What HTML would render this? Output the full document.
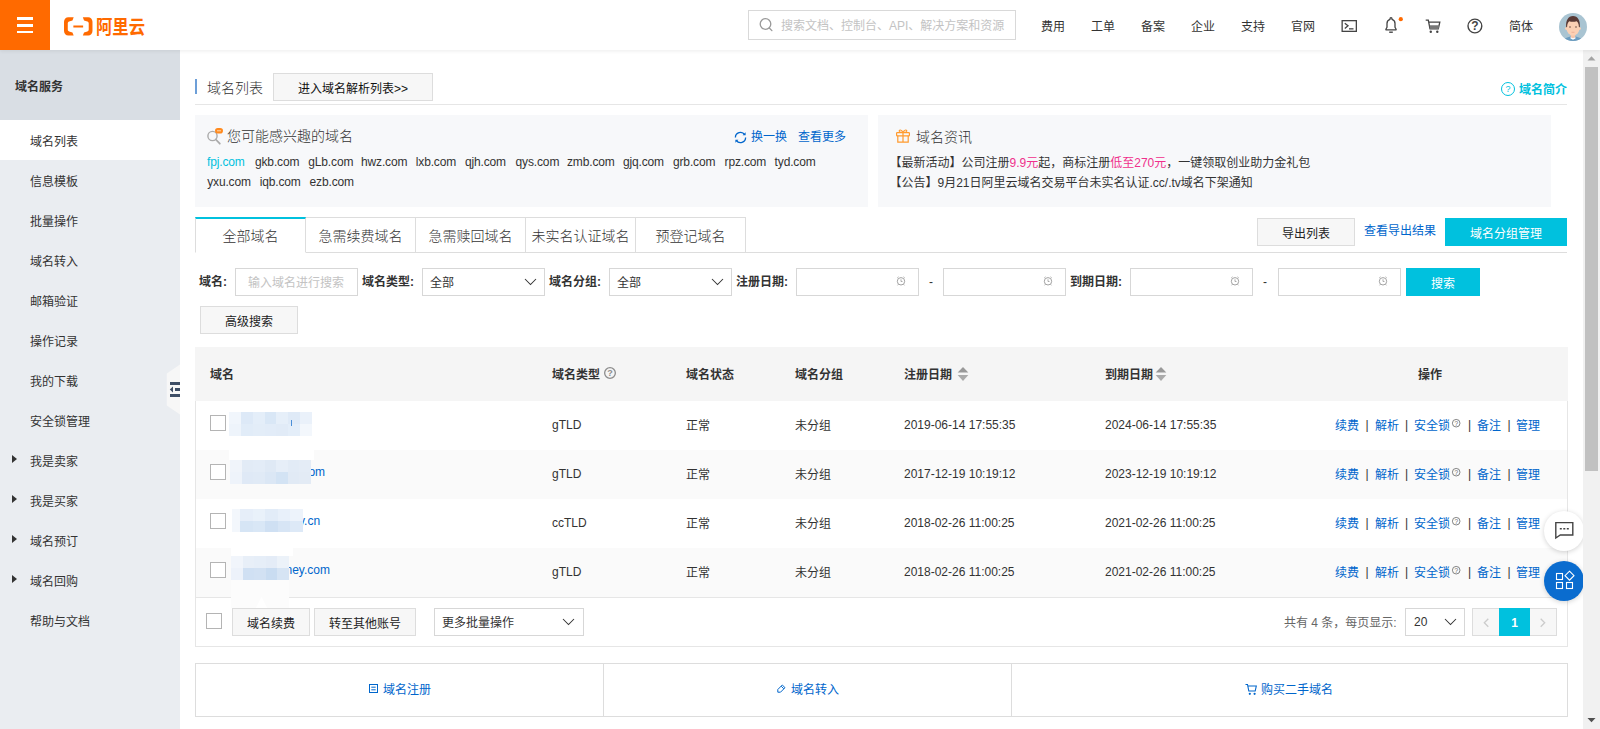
<!DOCTYPE html>
<html lang="zh-CN">
<head>
<meta charset="utf-8">
<title>域名列表</title>
<style>
*{box-sizing:border-box;margin:0;padding:0}
html,body{width:1600px;height:729px;overflow:hidden;background:#fff}
body{font-family:"Liberation Sans","Noto Sans CJK SC",sans-serif;font-size:12px;color:#333;position:relative}
a{color:#06c;text-decoration:none}
.abs{position:absolute}
.t{position:absolute;white-space:nowrap;font-size:12px;line-height:20px}
#hdr{position:absolute;left:0;top:0;width:1600px;height:50px;background:#fff;box-shadow:0 1px 4px rgba(0,0,0,.08);z-index:10}
#burger{position:absolute;left:0;top:0;width:50px;height:50px;background:#ff6a00}
#burger i{position:absolute;left:17px;width:16px;height:2.7px;background:#fff}
#logo{position:absolute;left:62.500px;top:16px}
#logotxt{position:absolute;left:96px;top:15.7px;font-size:19px;font-weight:700;color:#ff6a00;line-height:24px;white-space:nowrap;transform:scaleX(.86);transform-origin:0 0}
#search{position:absolute;left:748px;top:10px;width:268px;height:30px;border:1px solid #d9d9d9;background:#fff}
#search span{position:absolute;left:32px;top:1px;line-height:28px;color:#c3c3c3;font-size:12px;white-space:nowrap}
.nav{position:absolute;top:2px;line-height:50px;font-size:12px;color:#333;white-space:nowrap}
#side{position:absolute;left:0;top:50px;width:180px;height:679px;background:#eaedf1}
#side .ttl{height:70px;background:#d9dee4;line-height:74px;overflow:hidden;padding-left:15px;font-weight:bold;font-size:12px;color:#333}
#side .it{height:40px;line-height:44px;overflow:hidden;padding-left:30px;font-size:12px;color:#333;position:relative}
#side .it.on{background:#fff}
#side .it b{position:absolute;left:12px;top:15px;width:0;height:0;border-left:5px solid #333;border-top:4.5px solid transparent;border-bottom:4.5px solid transparent}
.btn{position:absolute;border:1px solid #ddd;background:#f7f7f7;color:#222;text-align:center;font-size:12px;white-space:nowrap;height:28px;line-height:30px;overflow:hidden}
.cy{background:#00c1de;border-color:#00c1de;color:#fff}
.panel{position:absolute;top:115px;height:92px;background:#f7f8fa}
.tab{position:absolute;top:217px;height:36px;width:111px;border:1px solid #ddd;text-align:center;line-height:37px;font-size:14px;color:#333;background:#fff;font-weight:300}
.lbl{position:absolute;top:268px;line-height:29.500px;height:28px;font-weight:bold;font-size:12px;color:#333;white-space:nowrap}
.inp{position:absolute;top:268px;height:28px;border:1px solid #d7d7d7;background:#fff;line-height:29px;font-size:12px;color:#333;padding-left:7px;overflow:hidden}
.th{position:absolute;top:348px;line-height:55px;height:54px;font-weight:bold;font-size:12px;color:#333;white-space:nowrap}
.row{position:absolute;left:196px;width:1371px;height:49px}
.row span,.row a{position:absolute;top:1px;line-height:49px;white-space:nowrap;font-size:12px}
.row em{position:absolute;top:0;line-height:49px;font-style:normal;color:#333;font-size:12px}
.cb{position:absolute;width:16px;height:16px;border:1px solid #b4b4b4;background:#fff}
.dm span{position:absolute;line-height:20px;font-size:12px;color:#333;white-space:nowrap;letter-spacing:-.15px}
.chev{position:absolute}
</style>
</head>
<body>
<div id="side"><div class="ttl">域名服务</div>
<div class="it on">域名列表</div>
<div class="it">信息模板</div>
<div class="it">批量操作</div>
<div class="it">域名转入</div>
<div class="it">邮箱验证</div>
<div class="it">操作记录</div>
<div class="it">我的下载</div>
<div class="it">安全锁管理</div>
<div class="it"><b></b>我是卖家</div>
<div class="it"><b></b>我是买家</div>
<div class="it"><b></b>域名预订</div>
<div class="it"><b></b>域名回购</div>
<div class="it">帮助与文档</div>
</div>
<svg class="abs" style="left:166px;top:364px" width="14" height="52" viewBox="0 0 14 52"><path d="M14 .5L.8 9.500v32L14 50.500z" fill="#f7f7f7"/><path d="M4 18h10v3H4zM9 24h5v3H9zM4 30h10v3H4z" fill="#3e4e66"/><path d="M7 22.500v6l-3.200-3z" fill="#3e4e66"/></svg>
<div id="hdr">
<div id="burger"><i style="top:17px"></i><i style="top:24px"></i><i style="top:30.500px"></i></div>
<svg id="logo" width="30.500" height="22" viewBox="0 0 30 20" preserveAspectRatio="none"><path d="M10.500 1.200H5.200C2.900 1.200 1 3 1 5.300v8.400c0 2.300 1.900 4.100 4.200 4.100h5.300l-1.200-2.900-3.300-.9c-.8-.2-1.300-.9-1.300-1.700V6.700c0-.8.500-1.500 1.300-1.700l3.300-.9zM19.500 1.200h5.300c2.300 0 4.200 1.800 4.200 4.100v8.400c0 2.300-1.900 4.100-4.200 4.100h-5.300l1.200-2.900 3.300-.9c.8-.2 1.300-.9 1.300-1.700V6.700c0-.8-.5-1.500-1.300-1.700l-3.300-.9zM10.200 8.600h9.600v1.800h-9.600z" fill="#ff6a00"/></svg>
<div id="logotxt">阿里云</div>
<div id="search"><svg style="position:absolute;left:9px;top:6px" width="16" height="16" viewBox="0 0 16 16"><circle cx="7.500" cy="7" r="5.300" fill="none" stroke="#999" stroke-width="1.300"/><path d="M11.300 11l2.600 2.600" stroke="#999" stroke-width="1.300" stroke-linecap="round"/></svg><span>搜索文档、控制台、API、解决方案和资源</span></div>
<div class="nav" style="left:1041px">费用</div>
<div class="nav" style="left:1091px">工单</div>
<div class="nav" style="left:1141px">备案</div>
<div class="nav" style="left:1191px">企业</div>
<div class="nav" style="left:1241px">支持</div>
<div class="nav" style="left:1291px">官网</div>
<div class="nav" style="left:1509px">简体</div>
<svg class="abs" style="left:1341px;top:19px" width="17" height="14" viewBox="0 0 17 14"><rect x="1.150" y="1.650" width="14.200" height="10.700" fill="none" stroke="#444" stroke-width="1.300"/><path d="M3.800 4.200l3.200 2.600-3.200 2.600" fill="none" stroke="#444" stroke-width="1.300"/><path d="M8 9.850h4.500" stroke="#444" stroke-width="1.300"/></svg>
<svg class="abs" style="left:1383px;top:17px" width="22" height="18" viewBox="0 0 22 18"><path d="M7 1.700a1 1 0 0 1 2 0v.6c1.900.5 3 2.200 3 4.300v3.600l1.100 2v.6H2.900v-.6l1.100-2V6.600c0-2.100 1.100-3.800 3-4.300z" fill="none" stroke="#444" stroke-width="1.300" stroke-linejoin="round"/><path d="M6.200 15.200h3.600" stroke="#444" stroke-width="1.400"/><circle cx="17.800" cy="2.200" r="2.100" fill="#ff6a00"/></svg>
<svg class="abs" style="left:1425px;top:19px" width="17" height="15" viewBox="0 0 17 15"><path d="M.7 1.200h2.600l1.700 8.700h8.300l1.500-6.700H4" fill="none" stroke="#444" stroke-width="1.300"/><path d="M4.600 6.200h9.700l-.8 3.700H5.200z" fill="#777"/><circle cx="5.800" cy="12.800" r="1.200" fill="#444"/><circle cx="12.300" cy="12.800" r="1.200" fill="#444"/></svg>
<svg class="abs" style="left:1466px;top:17px" width="18" height="18" viewBox="0 0 18 18"><circle cx="8.900" cy="9" r="6.900" fill="none" stroke="#444" stroke-width="1.400"/><text x="8.900" y="13.300" font-size="12" font-weight="bold" fill="#444" text-anchor="middle" font-family="Liberation Sans, sans-serif">?</text></svg>
<svg class="abs" style="left:1559px;top:13px" width="28" height="28" viewBox="0 0 28 28"><defs><clipPath id="avc"><circle cx="14" cy="14" r="14"/></clipPath></defs><g clip-path="url(#avc)"><rect width="28" height="28" fill="#a9c4d2"/><path d="M5 28c0-3 4-4.500 9-4.500s9 1.500 9 4.500z" fill="#6b9cc0"/><path d="M11.800 21h4.400v3.600l-2.200 1.200-2.200-1.200z" fill="#f6c4a8"/><path d="M11.600 24.200l2.400 1 2.400-1 .3 1-2.700 1.500-2.700-1.500z" fill="#fff"/><ellipse cx="14" cy="14.500" rx="6.600" ry="8.300" fill="#fbd0b4"/><circle cx="7.400" cy="15.600" r="1.300" fill="#fbd0b4"/><circle cx="20.600" cy="15.600" r="1.300" fill="#fbd0b4"/><path d="M7.200 14.200c-.7-6.500 2-11.200 6.800-11.200s7.500 4.700 6.800 11.200l-.9-.3c-.1-3.200-1-4.700-2.300-5.700-2.500.8-5.300.8-7.200 0-1.300 1-2.200 2.500-2.300 5.700z" fill="#5a3a36"/><circle cx="11" cy="14" r=".8" fill="#6a4a40"/><circle cx="17" cy="14" r=".8" fill="#6a4a40"/><path d="M12.500 19.300h3" stroke="#e8a58c" stroke-width=".7"/></g></svg>
</div>
<div class="abs" style="left:195px;top:79px;width:2px;height:15px;background:#6d9fd8"></div>
<div class="t" style="left:207px;top:78px;font-size:14px;color:#333;font-weight:300">域名列表</div>
<div class="btn" style="left:273px;top:73px;width:160px;color:#111">进入域名解析列表&gt;&gt;</div>
<div class="abs" style="left:195px;top:104px;width:1372px;height:1px;background:#e6e6e6"></div>
<div class="t" style="left:1519px;top:79.500px;color:#00c1de;font-weight:bold">域名简介</div>
<svg class="abs" style="left:1500px;top:81px" width="16" height="16" viewBox="0 0 16 16"><circle cx="8" cy="8" r="6.5" fill="none" stroke="#00c1de" stroke-width="1"/><text x="8" y="11.24" font-size="9" fill="#00c1de" text-anchor="middle" font-family="Liberation Sans, sans-serif">?</text></svg>
<div class="panel" style="left:195px;width:673px"></div><div class="panel" style="left:878px;width:673px"></div>
<svg class="abs" style="left:206px;top:127px" width="18" height="18" viewBox="0 0 18 18"><circle cx="6.500" cy="9" r="4.600" fill="none" stroke="#aaa" stroke-width="1.400"/><path d="M9.800 12.500l4 4.200" stroke="#aaa" stroke-width="1.800" stroke-linecap="round"/><rect x="9" y="1" width="8" height="5.600" rx="2.800" fill="#ff8a1f"/><path d="M11 3.800h4" stroke="#ffd9b0" stroke-width="1"/></svg>
<div class="t" style="left:227px;top:126px;font-size:14px;color:#333;font-weight:300">您可能感兴趣的域名</div>
<div class="dm">
<span style="left:207px;top:152px;color:#00c1de">fpj.com</span>
<span style="left:255px;top:152px">gkb.com</span>
<span style="left:308.3px;top:152px">gLb.com</span>
<span style="left:361px;top:152px">hwz.com</span>
<span style="left:415.8px;top:152px">lxb.com</span>
<span style="left:465px;top:152px">qjh.com</span>
<span style="left:515.6px;top:152px">qys.com</span>
<span style="left:567px;top:152px">zmb.com</span>
<span style="left:623px;top:152px">gjq.com</span>
<span style="left:673px;top:152px">grb.com</span>
<span style="left:724.6px;top:152px">rpz.com</span>
<span style="left:774.6px;top:152px">tyd.com</span>
<span style="left:207.2px;top:172px">yxu.com</span>
<span style="left:259.7px;top:172px">iqb.com</span>
<span style="left:309.6px;top:172px">ezb.com</span>
</div>
<svg class="abs" style="left:733px;top:130px" width="15" height="15" viewBox="0 0 15 15"><path d="M12.600 7.500a5.100 5.100 0 0 1-9.300 2.900M2.400 7.500a5.100 5.100 0 0 1 9.300-2.900" fill="none" stroke="#06c" stroke-width="1.300"/><path d="M12.600 2.200v3h-3zM2.400 12.800v-3h3z" fill="#06c"/></svg>
<div class="t" style="left:751px;top:127px;color:#06c">换一换</div>
<div class="t" style="left:798px;top:127px;color:#06c">查看更多</div>
<svg class="abs" style="left:895px;top:128px" width="16" height="16" viewBox="0 0 16 16"><g fill="none" stroke="#ff9a2e" stroke-width="1.200"><rect x="1.600" y="4.600" width="12.800" height="3.200" rx=".6"/><path d="M2.800 7.800v6.400h10.400V7.800M8 4.600v9.600"/><path d="M8 4.400C6.500 1.200 3.600 1.600 4.400 3.400c.5 1 2 1.100 3.600 1zM8 4.400c1.500-3.200 4.400-2.800 3.600-1-.5 1-2 1.100-3.600 1z"/></g></svg>
<div class="t" style="left:916px;top:126.500px;font-size:14px;color:#333;font-weight:300">域名资讯</div>
<div class="t" style="left:889.500px;top:153px;color:#333">【最新活动】公司注册<span style="color:#f0308c">9.9元</span>起，商标注册<span style="color:#f0308c">低至270元</span>，一键领取创业助力金礼包<br>【公告】9月21日阿里云域名交易平台未实名认证.cc/.tv域名下架通知</div>
<div class="abs" style="left:195px;top:252px;width:1372px;height:1px;background:#ddd"></div>
<div class="tab" style="left:305px">急需续费域名</div>
<div class="tab" style="left:415px">急需赎回域名</div>
<div class="tab" style="left:525px">未实名认证域名</div>
<div class="tab" style="left:635px">预登记域名</div>
<div class="tab" style="left:195px;border-top:2px solid #00c1de;border-bottom-color:#fff;line-height:35px">全部域名</div>
<div class="btn" style="left:1257px;top:218px;width:98px">导出列表</div>
<div class="t" style="left:1364px;top:221px;color:#06c">查看导出结果</div>
<div class="btn cy" style="left:1445px;top:218px;width:122px">域名分组管理</div>
<div class="lbl" style="left:199px">域名:</div>
<div class="inp" style="left:235px;width:123px;color:#c3c3c3;padding-left:12px">输入域名进行搜索</div>
<div class="lbl" style="left:362px">域名类型:</div>
<div class="inp" style="left:422px;width:123px">全部</div><svg class="chev" style="left:523.5px;top:278px" width="13" height="8" viewBox="0 0 13 8"><path d="M1 1l5.5 5.5 5.5 -5.5" fill="none" stroke="#333" stroke-width="1.05"/></svg>
<div class="lbl" style="left:549px">域名分组:</div>
<div class="inp" style="left:609px;width:123px">全部</div><svg class="chev" style="left:710.5px;top:278px" width="13" height="8" viewBox="0 0 13 8"><path d="M1 1l5.5 5.5 5.5 -5.5" fill="none" stroke="#333" stroke-width="1.05"/></svg>
<div class="lbl" style="left:736px">注册日期:</div>
<div class="inp" style="left:796px;width:123px"></div><svg class="abs" style="left:894.7px;top:275.3px" width="12" height="12" viewBox="0 0 12 12"><circle cx="6" cy="6.300" r="3.700" fill="none" stroke="#999" stroke-width=".9"/><path d="M6 4.300v2.200h1.500M2.300 2.800l1.200-1M9.700 2.800l-1.200-1M3.400 9.300l-.8 1M8.600 9.300l.8 1" fill="none" stroke="#999" stroke-width=".8"/></svg>
<div class="lbl" style="left:929px;font-weight:normal">-</div>
<div class="inp" style="left:943px;width:123px"></div><svg class="abs" style="left:1041.7px;top:275.3px" width="12" height="12" viewBox="0 0 12 12"><circle cx="6" cy="6.300" r="3.700" fill="none" stroke="#999" stroke-width=".9"/><path d="M6 4.300v2.200h1.500M2.300 2.800l1.200-1M9.700 2.800l-1.200-1M3.400 9.300l-.8 1M8.600 9.300l.8 1" fill="none" stroke="#999" stroke-width=".8"/></svg>
<div class="lbl" style="left:1070px">到期日期:</div>
<div class="inp" style="left:1130px;width:123px"></div><svg class="abs" style="left:1228.7px;top:275.3px" width="12" height="12" viewBox="0 0 12 12"><circle cx="6" cy="6.300" r="3.700" fill="none" stroke="#999" stroke-width=".9"/><path d="M6 4.300v2.200h1.500M2.300 2.800l1.200-1M9.700 2.800l-1.200-1M3.400 9.300l-.8 1M8.600 9.300l.8 1" fill="none" stroke="#999" stroke-width=".8"/></svg>
<div class="lbl" style="left:1263px;font-weight:normal">-</div>
<div class="inp" style="left:1278px;width:123px"></div><svg class="abs" style="left:1376.7px;top:275.3px" width="12" height="12" viewBox="0 0 12 12"><circle cx="6" cy="6.300" r="3.700" fill="none" stroke="#999" stroke-width=".9"/><path d="M6 4.300v2.200h1.500M2.300 2.800l1.200-1M9.700 2.800l-1.200-1M3.400 9.300l-.8 1M8.600 9.300l.8 1" fill="none" stroke="#999" stroke-width=".8"/></svg>
<div class="btn cy" style="left:1406px;top:268px;width:74px">搜索</div>
<div class="btn" style="left:200px;top:306px;width:98px">高级搜索</div>
<div class="abs" style="left:195px;top:347px;width:1373px;height:300px;border:1px solid #e6e6e6;border-top:0"></div>
<div class="abs" style="left:195px;top:347px;width:1373px;height:54px;background:#f5f5f5"></div>
<div class="th" style="left:210px">域名</div>
<div class="th" style="left:552px">域名类型</div>
<div class="th" style="left:686px">域名状态</div>
<div class="th" style="left:795px">域名分组</div>
<div class="th" style="left:904px">注册日期</div>
<div class="th" style="left:1105px">到期日期</div>
<div class="th" style="left:1418px">操作</div>
<svg class="abs" style="left:603px;top:366.4px" width="14" height="14" viewBox="0 0 14 14"><circle cx="7" cy="7" r="5.35" fill="none" stroke="#8c8c8c" stroke-width="1.3"/><text x="7" y="10.24" font-size="9" fill="#8c8c8c" text-anchor="middle" font-family="Liberation Sans, sans-serif" font-weight="bold">?</text></svg>
<svg class="abs" style="left:957.3px;top:366px" width="12" height="16" viewBox="0 0 12 16"><path d="M6 1l5.300 5.600H.7z" fill="#999"/><path d="M6 15L.7 9h10.600z" fill="#aaa"/></svg><svg class="abs" style="left:1154.8px;top:366px" width="12" height="16" viewBox="0 0 12 16"><path d="M6 1l5.300 5.600H.7z" fill="#999"/><path d="M6 15L.7 9h10.600z" fill="#aaa"/></svg>
<div class="row" style="top:401px;background:#fff"><i class="cb" style="left:14px;top:14px"></i><span style="left:356px;top:0">gTLD</span><span style="left:490px">正常</span><span style="left:599px">未分组</span><span style="left:708px;top:0">2019-06-14 17:55:35</span><span style="left:909px;top:0">2024-06-14 17:55:35</span><a style="left:1139px">续费</a><em style="left:1169.5px">|</em><a style="left:1179px">解析</a><em style="left:1209px">|</em><a style="left:1218px">安全锁</a><em style="left:1272px">|</em><a style="left:1281px">备注</a><em style="left:1311.4px">|</em><a style="left:1320px">管理</a></div>
<svg class="abs" style="left:1450.6px;top:418.40000000000003px" width="10.4" height="10.4" viewBox="0 0 10.4 10.4"><circle cx="5.2" cy="5.2" r="3.8000000000000003" fill="none" stroke="#666" stroke-width="0.8"/><text x="5.2" y="7.54" font-size="6.5" fill="#666" text-anchor="middle" font-family="Liberation Sans, sans-serif">?</text></svg>
<div class="row" style="top:450px;background:#fafafa"><i class="cb" style="left:14px;top:14px"></i><span style="left:356px;top:0">gTLD</span><span style="left:490px">正常</span><span style="left:599px">未分组</span><span style="left:708px;top:0">2017-12-19 10:19:12</span><span style="left:909px;top:0">2023-12-19 10:19:12</span><a style="left:1139px">续费</a><em style="left:1169.5px">|</em><a style="left:1179px">解析</a><em style="left:1209px">|</em><a style="left:1218px">安全锁</a><em style="left:1272px">|</em><a style="left:1281px">备注</a><em style="left:1311.4px">|</em><a style="left:1320px">管理</a></div>
<svg class="abs" style="left:1450.6px;top:467.40000000000003px" width="10.4" height="10.4" viewBox="0 0 10.4 10.4"><circle cx="5.2" cy="5.2" r="3.8000000000000003" fill="none" stroke="#666" stroke-width="0.8"/><text x="5.2" y="7.54" font-size="6.5" fill="#666" text-anchor="middle" font-family="Liberation Sans, sans-serif">?</text></svg>
<div class="row" style="top:499px;background:#fff"><i class="cb" style="left:14px;top:14px"></i><span style="left:356px;top:0">ccTLD</span><span style="left:490px">正常</span><span style="left:599px">未分组</span><span style="left:708px;top:0">2018-02-26 11:00:25</span><span style="left:909px;top:0">2021-02-26 11:00:25</span><a style="left:1139px">续费</a><em style="left:1169.5px">|</em><a style="left:1179px">解析</a><em style="left:1209px">|</em><a style="left:1218px">安全锁</a><em style="left:1272px">|</em><a style="left:1281px">备注</a><em style="left:1311.4px">|</em><a style="left:1320px">管理</a></div>
<svg class="abs" style="left:1450.6px;top:516.4px" width="10.4" height="10.4" viewBox="0 0 10.4 10.4"><circle cx="5.2" cy="5.2" r="3.8000000000000003" fill="none" stroke="#666" stroke-width="0.8"/><text x="5.2" y="7.54" font-size="6.5" fill="#666" text-anchor="middle" font-family="Liberation Sans, sans-serif">?</text></svg>
<div class="row" style="top:548px;background:#fafafa"><i class="cb" style="left:14px;top:14px"></i><span style="left:356px;top:0">gTLD</span><span style="left:490px">正常</span><span style="left:599px">未分组</span><span style="left:708px;top:0">2018-02-26 11:00:25</span><span style="left:909px;top:0">2021-02-26 11:00:25</span><a style="left:1139px">续费</a><em style="left:1169.5px">|</em><a style="left:1179px">解析</a><em style="left:1209px">|</em><a style="left:1218px">安全锁</a><em style="left:1272px">|</em><a style="left:1281px">备注</a><em style="left:1311.4px">|</em><a style="left:1320px">管理</a></div>
<svg class="abs" style="left:1450.6px;top:565.4px" width="10.4" height="10.4" viewBox="0 0 10.4 10.4"><circle cx="5.2" cy="5.2" r="3.8000000000000003" fill="none" stroke="#666" stroke-width="0.8"/><text x="5.2" y="7.54" font-size="6.5" fill="#666" text-anchor="middle" font-family="Liberation Sans, sans-serif">?</text></svg>
<div class="abs" style="left:229px;top:412px;width:83px;height:24px;overflow:hidden"><i class="abs" style="left:0.0px;top:0;width:12.4px;height:12.0px;background:#f1f6fc"></i><i class="abs" style="left:11.9px;top:0;width:12.4px;height:12.0px;background:#dde9f7"></i><i class="abs" style="left:23.7px;top:0;width:12.4px;height:12.0px;background:#e4eef9"></i><i class="abs" style="left:35.6px;top:0;width:12.4px;height:12.0px;background:#d9e7f6"></i><i class="abs" style="left:47.4px;top:0;width:12.4px;height:12.0px;background:#e6eff9"></i><i class="abs" style="left:59.3px;top:0;width:12.4px;height:12.0px;background:#dfeaf7"></i><i class="abs" style="left:71.1px;top:0;width:12.4px;height:12.0px;background:#eaf1fa"></i><i class="abs" style="left:0.0px;top:12.0px;width:12.4px;height:12.0px;background:#eef4fb"></i><i class="abs" style="left:11.9px;top:12.0px;width:12.4px;height:12.0px;background:#e1ecf8"></i><i class="abs" style="left:23.7px;top:12.0px;width:12.4px;height:12.0px;background:#e3edf8"></i><i class="abs" style="left:35.6px;top:12.0px;width:12.4px;height:12.0px;background:#e2ecf8"></i><i class="abs" style="left:47.4px;top:12.0px;width:12.4px;height:12.0px;background:#e1ebf7"></i><i class="abs" style="left:59.3px;top:12.0px;width:12.4px;height:12.0px;background:#e4eef9"></i><i class="abs" style="left:71.1px;top:12.0px;width:12.4px;height:12.0px;background:#f3f7fc"></i></div>
<div class="abs" style="left:291px;top:420px;width:1px;height:6px;background:#4a8fd8"></div>
<div class="abs" style="left:229px;top:448px;width:85px;height:12px;background:#fff"></div>
<div class="t" style="left:308.400px;top:462px;color:#06c">om</div>
<div class="abs" style="left:230px;top:460px;width:81px;height:24px;overflow:hidden"><i class="abs" style="left:0.0px;top:0;width:12.1px;height:12.0px;background:#f0f4fa"></i><i class="abs" style="left:11.6px;top:0;width:12.1px;height:12.0px;background:#e2ebf6"></i><i class="abs" style="left:23.1px;top:0;width:12.1px;height:12.0px;background:#e3ecf7"></i><i class="abs" style="left:34.7px;top:0;width:12.1px;height:12.0px;background:#dfe9f5"></i><i class="abs" style="left:46.3px;top:0;width:12.1px;height:12.0px;background:#e6eef8"></i><i class="abs" style="left:57.9px;top:0;width:12.1px;height:12.0px;background:#e2ebf6"></i><i class="abs" style="left:69.4px;top:0;width:12.1px;height:12.0px;background:#e4ecf6"></i><i class="abs" style="left:0.0px;top:12.0px;width:12.1px;height:12.0px;background:#eef3fa"></i><i class="abs" style="left:11.6px;top:12.0px;width:12.1px;height:12.0px;background:#dfe9f6"></i><i class="abs" style="left:23.1px;top:12.0px;width:12.1px;height:12.0px;background:#e0eaf6"></i><i class="abs" style="left:34.7px;top:12.0px;width:12.1px;height:12.0px;background:#dbe7f5"></i><i class="abs" style="left:46.3px;top:12.0px;width:12.1px;height:12.0px;background:#d3e3f4"></i><i class="abs" style="left:57.9px;top:12.0px;width:12.1px;height:12.0px;background:#e1eaf5"></i><i class="abs" style="left:69.4px;top:12.0px;width:12.1px;height:12.0px;background:#e3ebf5"></i></div>
<div class="abs" style="left:233px;top:499px;width:75px;height:10px;background:#fff"></div>
<div class="t" style="left:299px;top:511px;color:#06c">y.cn</div>
<div class="abs" style="left:232px;top:509px;width:8px;height:23px;background:#f3f7fc"></div>
<div class="abs" style="left:240px;top:509px;width:63px;height:23px;overflow:hidden"><i class="abs" style="left:0.0px;top:0;width:13.1px;height:11.5px;background:#e6eef9"></i><i class="abs" style="left:12.6px;top:0;width:13.1px;height:11.5px;background:#e9f1fa"></i><i class="abs" style="left:25.2px;top:0;width:13.1px;height:11.5px;background:#e2ecf8"></i><i class="abs" style="left:37.8px;top:0;width:13.1px;height:11.5px;background:#e8f0fa"></i><i class="abs" style="left:50.4px;top:0;width:13.1px;height:11.5px;background:#edf3fb"></i><i class="abs" style="left:0.0px;top:11.5px;width:13.1px;height:11.5px;background:#d6e5f5"></i><i class="abs" style="left:12.6px;top:11.5px;width:13.1px;height:11.5px;background:#d9e7f6"></i><i class="abs" style="left:25.2px;top:11.5px;width:13.1px;height:11.5px;background:#cfe0f3"></i><i class="abs" style="left:37.8px;top:11.5px;width:13.1px;height:11.5px;background:#d7e5f5"></i><i class="abs" style="left:50.4px;top:11.5px;width:13.1px;height:11.5px;background:#dde9f7"></i></div>
<div class="abs" style="left:231px;top:544px;width:62px;height:12px;background:#fff"></div>
<div class="t" style="left:285.500px;top:560px;color:#06c">ney.com</div>
<div class="abs" style="left:231px;top:556px;width:58px;height:24px;overflow:hidden"><i class="abs" style="left:0.0px;top:0;width:12.1px;height:12.0px;background:#f1f5fb"></i><i class="abs" style="left:11.6px;top:0;width:12.1px;height:12.0px;background:#e8eff8"></i><i class="abs" style="left:23.2px;top:0;width:12.1px;height:12.0px;background:#e6eef8"></i><i class="abs" style="left:34.8px;top:0;width:12.1px;height:12.0px;background:#e4ecf7"></i><i class="abs" style="left:46.4px;top:0;width:12.1px;height:12.0px;background:#ecf2f9"></i><i class="abs" style="left:0.0px;top:12.0px;width:12.1px;height:12.0px;background:#edf2fa"></i><i class="abs" style="left:11.6px;top:12.0px;width:12.1px;height:12.0px;background:#d0e0f3"></i><i class="abs" style="left:23.2px;top:12.0px;width:12.1px;height:12.0px;background:#d2e1f3"></i><i class="abs" style="left:34.8px;top:12.0px;width:12.1px;height:12.0px;background:#c9dcf1"></i><i class="abs" style="left:46.4px;top:12.0px;width:12.1px;height:12.0px;background:#d6e4f4"></i></div>
<div class="abs" style="left:231px;top:580px;width:58px;height:28px;background:#fcfcfc"></div>
<svg class="abs" style="left:231px;top:586px" width="58" height="22" viewBox="0 0 58 22"><path d="M25 22l5.500-11 5.500 11z" fill="#fff"/></svg>
<div class="abs" style="left:196px;top:597px;width:35px;height:1px;background:#e6e6e6"></div><div class="abs" style="left:289px;top:597px;width:1278px;height:1px;background:#e6e6e6"></div>
<i class="cb" style="left:206px;top:613px"></i>
<div class="btn" style="left:232px;top:608px;width:78px">域名续费</div>
<div class="btn" style="left:314px;top:608px;width:102px">转至其他账号</div>
<div class="inp" style="left:434px;top:608px;width:150px">更多批量操作</div><svg class="chev" style="left:562px;top:618px" width="13" height="8" viewBox="0 0 13 8"><path d="M1 1l5.5 5.5 5.5 -5.5" fill="none" stroke="#333" stroke-width="1.05"/></svg>
<div class="t" style="left:1284px;top:613px;color:#666">共有 4 条，每页显示:</div>
<div class="inp" style="left:1405px;top:608px;width:60px;padding-left:8px;line-height:27px">20</div><svg class="chev" style="left:1443.5px;top:618px" width="13" height="8" viewBox="0 0 13 8"><path d="M1 1l5.5 5.5 5.5 -5.5" fill="none" stroke="#333" stroke-width="1.05"/></svg>
<div class="btn" style="left:1472px;top:608px;width:28px"></div><svg class="abs" style="left:1483px;top:618px" width="7" height="10" viewBox="0 0 7 10"><path d="M5.300 .8L1.300 4.800l4 4" fill="none" stroke="#ccc" stroke-width="1.300"/></svg>
<div class="btn" style="left:1529px;top:608px;width:28px"></div><svg class="abs" style="left:1539px;top:618px" width="7" height="10" viewBox="0 0 7 10"><path d="M1.700 .8l4 4-4 4" fill="none" stroke="#ccc" stroke-width="1.300"/></svg>
<div class="btn cy" style="left:1499px;top:608px;width:31px;font-weight:bold;line-height:28px">1</div>
<div class="abs" style="left:195px;top:663px;width:1373px;height:54px;border:1px solid #ddd"></div>
<div class="abs" style="left:603px;top:663px;width:1px;height:54px;background:#ddd"></div>
<div class="abs" style="left:1011px;top:663px;width:1px;height:54px;background:#ddd"></div>
<svg class="abs" style="left:368px;top:683px" width="11" height="11" viewBox="0 0 11 11"><rect x="1.500" y="1.500" width="8" height="8" fill="none" stroke="#06c" stroke-width="1"/><path d="M3.300 4.200h4.400M3.300 6.800h4.400" stroke="#06c" stroke-width="1"/></svg>
<div class="t" style="left:383px;top:680px;color:#06c">域名注册</div>
<svg class="abs" style="left:776px;top:683px" width="11" height="11" viewBox="0 0 11 11"><path d="M1.800 6.500l4.500-4.500 2.700 2.700-4.500 4.500H1.800zM5.200 3.200l2.600 2.600" fill="none" stroke="#06c" stroke-width="1"/></svg>
<div class="t" style="left:791px;top:680px;color:#06c">域名转入</div>
<svg class="abs" style="left:1245px;top:682.500px" width="13" height="13" viewBox="0 0 13 13"><path d="M.5 1.500h2l1.300 6.500h6.400l1.100-5H3.200" fill="none" stroke="#06c" stroke-width="1.100"/><circle cx="4.800" cy="10.800" r="1.100" fill="#06c"/><circle cx="9.600" cy="10.800" r="1.100" fill="#06c"/></svg>
<div class="t" style="left:1261px;top:680px;color:#06c">购买二手域名</div>
<div class="abs" style="left:1544px;top:511px;width:40px;height:40px;border-radius:50%;background:#fff;box-shadow:0 1px 5px rgba(0,0,0,.18)"></div>
<svg class="abs" style="left:1554px;top:521px" width="22" height="20" viewBox="0 0 22 20"><path d="M1.800 1.600h17v12.400H6.300L1.800 17z" fill="none" stroke="#444" stroke-width="1.400"/><path d="M5.800 7.800h2M9.300 7.800h2M12.800 7.800h2" stroke="#444" stroke-width="1.600"/></svg>
<div class="abs" style="left:1544px;top:561px;width:40px;height:40px;border-radius:50%;background:#0a6ccf;box-shadow:0 1px 5px rgba(0,0,0,.18)"></div>
<svg class="abs" style="left:1554px;top:569px" width="22" height="22" viewBox="0 0 22 22"><g fill="none" stroke="#fff" stroke-width="1.100"><rect x="2.500" y="4.500" width="6" height="6"/><rect x="2.500" y="13.500" width="6" height="6"/><rect x="12.500" y="13.500" width="6" height="6"/><path d="M15.500 2.200l4.500 4.500-4.500 4.500-4.500-4.500z"/></g></svg>
<div class="abs" style="left:1583px;top:50px;width:17px;height:679px;background:#f1f1f1"></div>
<div class="abs" style="left:1585px;top:67px;width:13px;height:404px;background:#c1c1c1"></div>
<svg class="abs" style="left:1583px;top:50px" width="17" height="17" viewBox="0 0 17 17"><path d="M8.500 6.200l4 4.300h-8z" fill="#a3a3a3"/></svg>
<svg class="abs" style="left:1583px;top:712px" width="17" height="17" viewBox="0 0 17 17"><path d="M8.500 10.200l4-4.300h-8z" fill="#505050"/></svg>
</body>
</html>
